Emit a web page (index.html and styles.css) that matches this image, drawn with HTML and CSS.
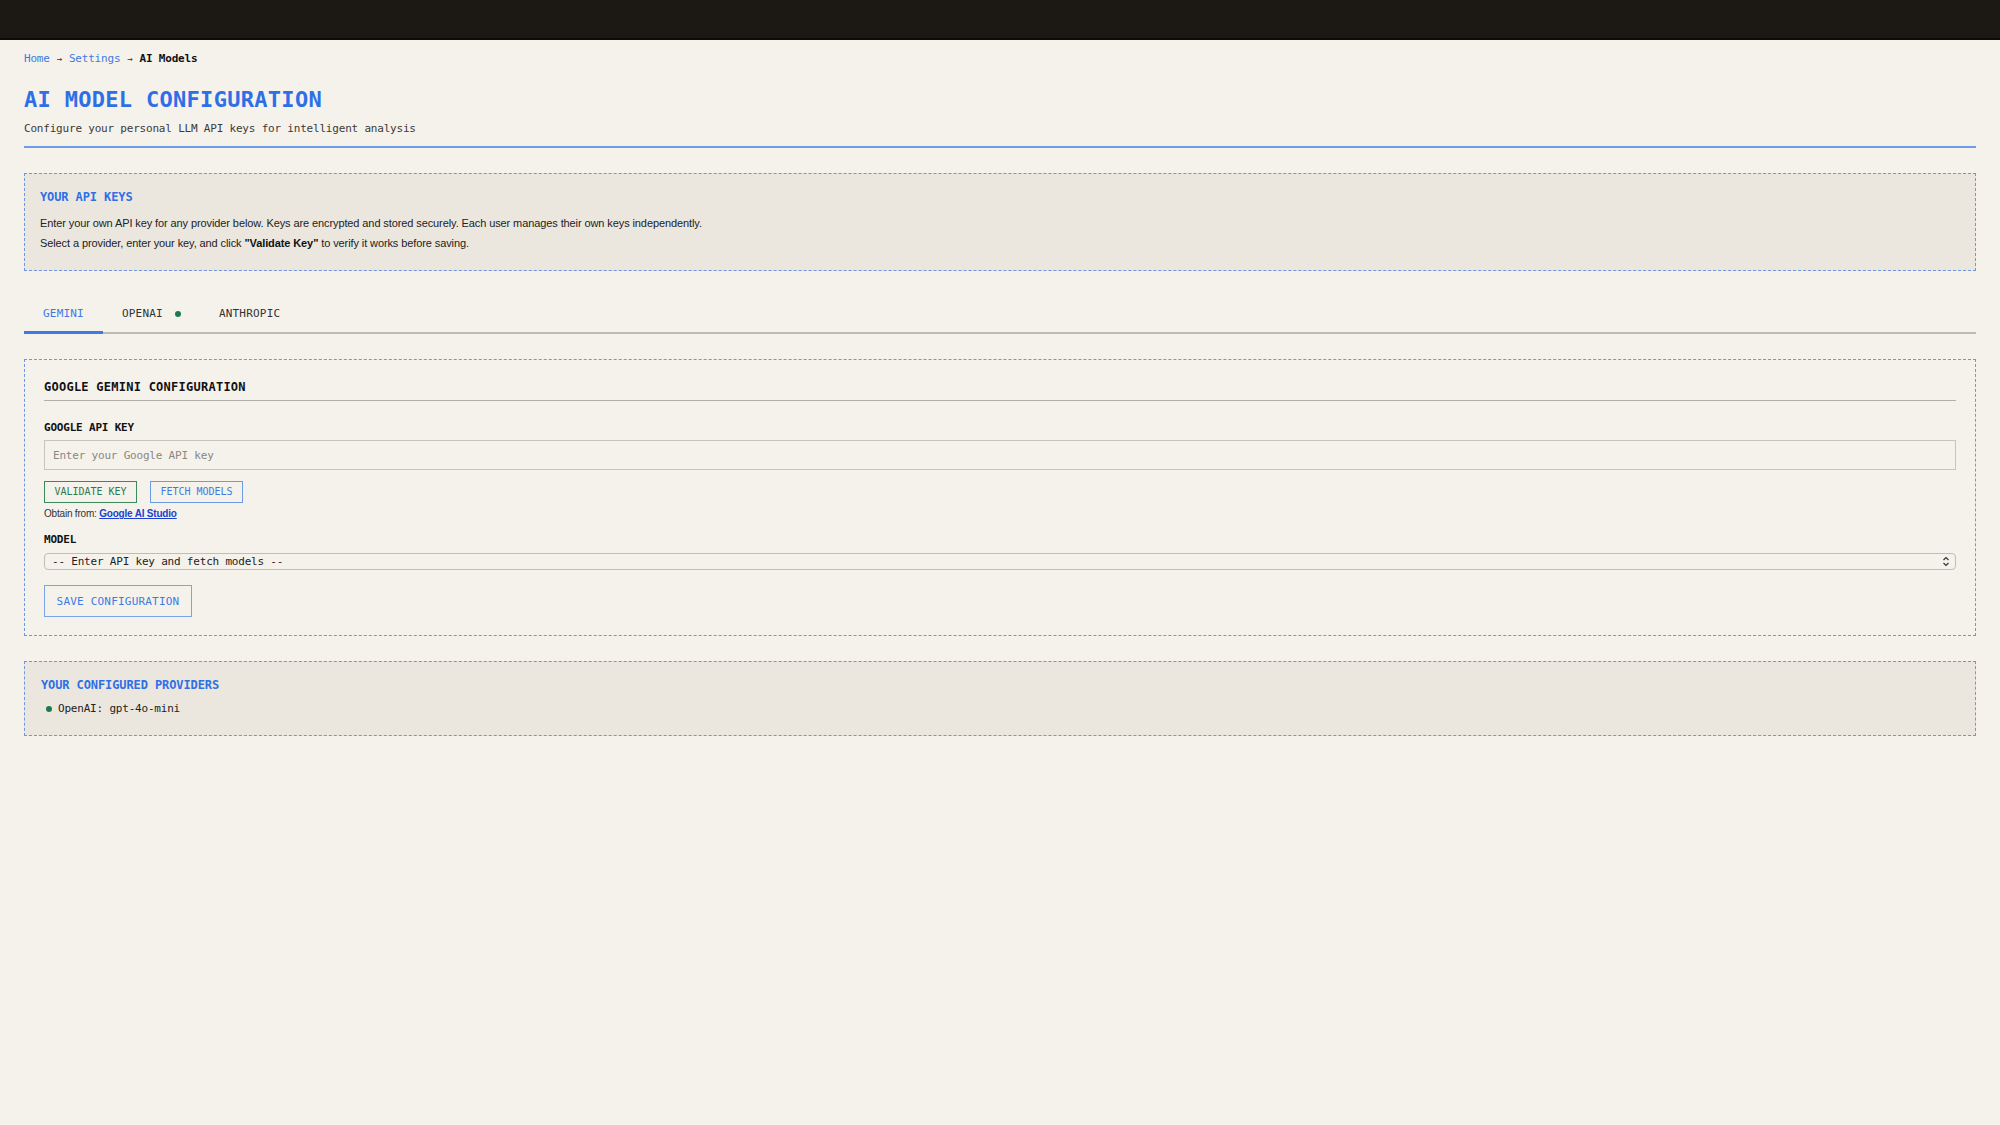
FILE: index.html
```html
<!DOCTYPE html>
<html lang="en">
<head>
<meta charset="utf-8">
<title>AI Model Configuration</title>
<link rel="stylesheet" href="styles.css">
</head>
<body>
<header class="topbar"></header>
<main class="page">
  <nav class="crumbs">
    <a href="#" class="crumb-link">Home</a>
    <span class="crumb-sep">→</span>
    <a href="#" class="crumb-link">Settings</a>
    <span class="crumb-sep">→</span>
    <span class="crumb-current">AI Models</span>
  </nav>

  <div class="page-head">
    <h1 class="title">AI MODEL CONFIGURATION</h1>
    <p class="subtitle">Configure your personal LLM API keys for intelligent analysis</p>
  </div>

  <section class="info-box">
    <h2 class="box-title">YOUR API KEYS</h2>
    <p class="info-text">Enter your own API key for any provider below. Keys are encrypted and stored securely. Each user manages their own keys independently.</p>
    <p class="info-text">Select a provider, enter your key, and click <strong>"Validate Key"</strong> to verify it works before saving.</p>
  </section>

  <div class="tabs">
    <button class="tab tab-active">GEMINI</button>
    <button class="tab">OPENAI <span class="tab-dot"></span></button>
    <button class="tab">ANTHROPIC</button>
  </div>

  <section class="config-box">
    <h3 class="config-title">GOOGLE GEMINI CONFIGURATION</h3>
    <label class="field-label">GOOGLE API KEY</label>
    <input class="text-input" type="text" placeholder="Enter your Google API key">
    <div class="btn-row">
      <button class="btn btn-green">VALIDATE KEY</button>
      <button class="btn btn-blue">FETCH MODELS</button>
    </div>
    <p class="obtain">Obtain from: <a href="#" class="obtain-link">Google AI Studio</a></p>
    <label class="field-label model-label">MODEL</label>
    <div class="select-wrap">
      <select class="select">
        <option>-- Enter API key and fetch models --</option>
      </select>
      <svg class="select-arrow" width="8" height="11" viewBox="0 0 8 11"><path d="M1.5 4 L4 1.5 L6.5 4 M1.5 7 L4 9.5 L6.5 7" fill="none" stroke="#333" stroke-width="1.2"/></svg>
    </div>
    <button class="btn-save">SAVE CONFIGURATION</button>
  </section>

  <section class="providers-box">
    <h2 class="box-title">YOUR CONFIGURED PROVIDERS</h2>
    <div class="provider-item"><span class="provider-dot"></span>OpenAI: gpt-4o-mini</div>
  </section>
</main>
</body>
</html>
```
FILE: styles.css
```css
html, body {
  margin: 0;
  padding: 0;
}
body {
  background: #f5f2ec;
  font-family: "DejaVu Sans Mono", "Liberation Mono", monospace;
  color: #1a1a1a;
  min-height: 1125px;
}
.topbar {
  height: 38px;
  background: #1c1915;
  border-bottom: 2px solid #0c0b09;
}
.page {
  padding: 12px 24px 40px;
}
.crumbs {
  font-size: 11px;
  line-height: 14px;
  letter-spacing: -0.2px;
  display: flex;
  gap: 7px;
  align-items: center;
}
.crumb-link {
  color: #3d7be3;
  text-decoration: none;
}
.crumb-sep {
  color: #333;
  font-size: 9px;
}
.crumb-current {
  font-weight: bold;
  color: #111;
}
.page-head {
  margin-top: 20px;
  padding-bottom: 10px;
  border-bottom: 2px solid #6d9be6;
}
.title {
  margin: 0;
  font-size: 22px;
  line-height: 28px;
  letter-spacing: 0.3px;
  font-weight: bold;
  color: #2f6fe6;
}
.subtitle {
  margin: 8px 0 0;
  font-size: 11px;
  line-height: 14px;
  letter-spacing: -0.2px;
  color: #3a3a3a;
}
.info-box {
  margin-top: 25px;
  border: 1px dashed #6d97e0;
  background: #ebe7df;
  padding: 16px 15px 17px;
}
.box-title {
  margin: 0;
  font-size: 12px;
  line-height: 14px;
  letter-spacing: -0.1px;
  font-weight: bold;
  color: #2f6fe6;
}
.info-text {
  margin: 0;
  font-family: "Liberation Sans", Arial, sans-serif;
  font-size: 11px;
  line-height: 20px;
  letter-spacing: -0.1px;
  color: #222;
}
.box-title + .info-text {
  margin-top: 9px;
}
.info-text strong {
  color: #111;
}
.tabs {
  margin-top: 24px;
  display: flex;
  border-bottom: 2px solid #bfbab2;
}
.tab {
  font-family: "DejaVu Sans Mono", "Liberation Mono", monospace;
  font-size: 11px;
  line-height: 14px;
  letter-spacing: 0.2px;
  color: #333;
  background: none;
  border: none;
  padding: 12px 19px 10px;
  border-bottom: 3px solid transparent;
  margin-bottom: -2px;
  display: flex;
  align-items: center;
  cursor: pointer;
}
.tab-active {
  color: #3d7be3;
  border-bottom-color: #3d7be3;
}
.tab-dot {
  width: 6px;
  height: 6px;
  border-radius: 50%;
  background: #1d7a4c;
  margin-left: 12px;
}
.config-box {
  margin-top: 25px;
  border: 1px dashed #6d97e0;
  padding: 20px 19px 18px;
  display: flex;
  flex-direction: column;
  align-items: flex-start;
}
.config-title {
  margin: 0;
  align-self: stretch;
  font-size: 12px;
  line-height: 14px;
  letter-spacing: 0.25px;
  font-weight: bold;
  color: #111;
  padding-bottom: 6px;
  border-bottom: 1px solid #b3aea6;
}
.field-label {
  margin-top: 20px;
  font-size: 11px;
  line-height: 14px;
  letter-spacing: -0.2px;
  font-weight: bold;
  color: #111;
}
.text-input {
  align-self: stretch;
  margin-top: 5px;
  height: 30px;
  box-sizing: border-box;
  border: 1px solid #c9c4bb;
  background: #f5f2ec;
  padding: 0 8px;
  font-family: "DejaVu Sans Mono", "Liberation Mono", monospace;
  font-size: 11px;
  letter-spacing: -0.2px;
  color: #222;
  outline: none;
}
.text-input::placeholder {
  color: #8a8782;
}
.btn-row {
  display: flex;
  gap: 13px;
  margin-top: 11px;
}
.btn {
  font-family: "DejaVu Sans Mono", "Liberation Mono", monospace;
  font-size: 10px;
  line-height: 12px;
  height: 22px;
  width: 93px;
  padding: 0;
  background: transparent;
  cursor: pointer;
}
.btn-green {
  border: 1px solid #3b8a5c;
  color: #2d7a4e;
}
.btn-blue {
  border: 1px solid #6d9be6;
  color: #3d7be3;
}
.obtain {
  margin: 4px 0 0;
  font-family: "Liberation Sans", Arial, sans-serif;
  font-size: 10px;
  line-height: 13px;
  letter-spacing: -0.2px;
  color: #333;
}
.obtain-link {
  color: #1c3fd0;
  font-weight: bold;
}
.model-label {
  margin-top: 13px;
}
.select-wrap {
  align-self: stretch;
  position: relative;
  margin-top: 6px;
}
.select {
  width: 100%;
  height: 17px;
  box-sizing: border-box;
  appearance: none;
  -webkit-appearance: none;
  border: 1px solid #c2bdb4;
  border-radius: 4px;
  background: #f5f2ec;
  padding: 0 7px;
  font-family: "DejaVu Sans Mono", "Liberation Mono", monospace;
  font-size: 11px;
  letter-spacing: -0.2px;
  color: #222;
  display: block;
}
.select-arrow {
  position: absolute;
  right: 6px;
  top: 3px;
}
.btn-save {
  margin-top: 15px;
  height: 32px;
  width: 148px;
  padding: 0;
  font-family: "DejaVu Sans Mono", "Liberation Mono", monospace;
  font-size: 11px;
  letter-spacing: 0.2px;
  color: #3d7be3;
  background: transparent;
  border: 1.5px solid #7aa3e8;
  cursor: pointer;
}
.providers-box {
  margin-top: 25px;
  border: 1px dashed #6d97e0;
  background: #ebe7df;
  padding: 16px 16px 19px;
}
.provider-item {
  margin-top: 10px;
  display: flex;
  align-items: center;
  font-size: 11px;
  line-height: 14px;
  letter-spacing: -0.2px;
  color: #222;
  padding-left: 5px;
}
.provider-dot {
  width: 6px;
  height: 6px;
  border-radius: 50%;
  background: #1d7a4c;
  margin-right: 6px;
}
```
